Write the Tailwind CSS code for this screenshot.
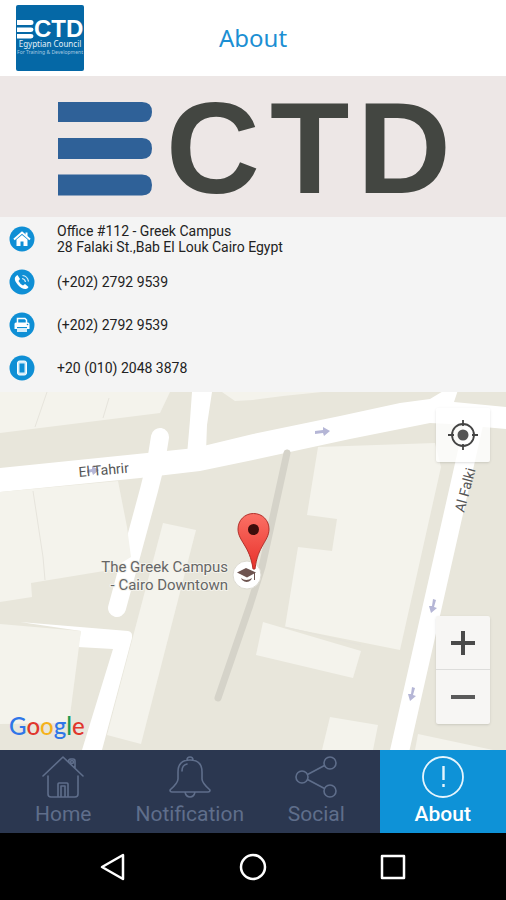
<!DOCTYPE html>
<html lang="en">
<head>
    <meta charset="UTF-8">
    <meta name="viewport" content="width=device-width, initial-scale=1.0">
    <title>ECTD - About</title>
    <script src="https://cdn.jsdelivr.net/npm/@tailwindcss/browser@4"></script>
</head>
<body class="min-h-screen flex flex-col bg-black font-['Roboto',sans-serif]">
    <!-- Header -->
    <header class="grid grid-cols-[1fr_auto_1fr] items-center h-19 px-4 bg-white">
        <svg class="w-17 h-[66px]" viewBox="0 0 68 66" role="img" aria-label="ECTD">
            <rect width="68" height="66" rx="2" fill="#0568a6"/>
            <path fill="#fff" d="M1 15h14q2.500 0 2.500 2.500T15 20H1zM1 22.500h14q2.500 0 2.500 2T15 27H1zM1 29h14q2.500 0 2.500 2T15 33.500H1z"/>
            <text x="18" y="32" font-family="Liberation Sans, sans-serif" font-weight="700" font-size="24" fill="#fff">CTD</text>
            <text x="34" y="42" text-anchor="middle" font-family="Noto Sans, sans-serif" font-size="8" fill="#e4f0f8">Egyptian Council</text>
            <text x="34" y="49" text-anchor="middle" font-family="Noto Sans, sans-serif" font-size="5" fill="#a9cbe2">For Training &amp; Development</text>
        </svg>
        <h1 class="text-2xl text-[#1c8fd3] font-['Noto_Sans',sans-serif]">About</h1>
    </header>

    <!-- Logo banner -->
    <div class="bg-[#ede7e6]">
        <svg class="block w-full h-[141px]" viewBox="0 76 506 141" role="img" aria-label="ECTD">
            <path fill="#2f6198" d="M58 102h84q10 0 10 10t-10 10H58zM58 138h84q10 0 10 10.500t-10 10.500H58zM58 174.500h84q10 0 10 10.500t-10 10.500H58z"/>
            <g font-family="Liberation Sans, sans-serif" font-weight="700" font-size="130" fill="#434641">
                <text x="166" y="193">C</text>
                <text x="270" y="193">T</text>
                <text x="357" y="193">D</text>
            </g>
        </svg>
    </div>

    <!-- Contact details -->
    <ul class="bg-[#f4f4f4] pb-[3px] text-sm leading-4 text-[#222]">
        <li class="flex items-center gap-[22px] h-[43px] px-[9px]">
            <svg class="w-[26px] h-[26px]" viewBox="0 0 26 26">
                <circle cx="13" cy="13" r="12.500" fill="#0f8fd5"/>
                <path d="M5 13.500L13 6.500l8 7" fill="none" stroke="#fff" stroke-width="2"/>
                <path d="M7.500 13.500L13 9l5.500 4.500V20h-4v-4.500h-3V20h-4zM16.500 6.500h2v4l-2-1.500z" fill="#fff"/>
            </svg>
            <p>Office #112 - Greek Campus<br>28 Falaki St.,Bab El Louk Cairo Egypt</p>
        </li>
        <li class="flex items-center gap-[22px] h-[43px] px-[9px]">
            <svg class="w-[26px] h-[26px]" viewBox="0 0 26 26">
                <circle cx="13" cy="13" r="12.500" fill="#0f8fd5"/>
                <path d="M6 8.500Q7 6.500 8.500 6l2.500 4-1.500 2q1.500 3 4.500 4.500l2-1.500 3.500 3q-.5 1.500-2.500 2-4 .5-8-4T6 8.500z" fill="#fff"/>
                <path d="M13 9.500q3 .5 3.500 3.500M13.500 6.500q5 .5 6 6" fill="none" stroke="#d5edf9" stroke-width="1.200"/>
            </svg>
            <a href="tel:+20227929539">(+202) 2792 9539</a>
        </li>
        <li class="flex items-center gap-[22px] h-11 px-[9px]">
            <svg class="w-[26px] h-[26px]" viewBox="0 0 26 26">
                <circle cx="13" cy="13" r="12.500" fill="#0f8fd5"/>
                <path d="M8.500 11V6.500h7.500l1.500 1.500v3" fill="none" stroke="#fff" stroke-width="1.500"/>
                <path d="M7 10.500h12q1.500 0 1.500 1.500v5h-2.500v-2H8v2H5.500v-5q0-1.500 1.500-1.500z" fill="#fff"/>
                <path d="M8 16h10v4H8z" fill="#d5edf9"/>
                <circle cx="18.500" cy="12.500" r=".8" fill="#0f8fd5"/>
            </svg>
            <span>(+202) 2792 9539</span>
        </li>
        <li class="flex items-center gap-[22px] h-[42px] px-[9px]">
            <svg class="w-[26px] h-[26px]" viewBox="0 0 26 26">
                <circle cx="13" cy="13" r="12.500" fill="#0f8fd5"/>
                <rect x="8.500" y="6" width="9" height="14" rx="2" fill="#d5edf9" stroke="#fff"/>
                <rect x="10.500" y="8.500" width="5" height="9" fill="#0f8fd5"/>
            </svg>
            <a href="tel:+2001020483878">+20 (010) 2048 3878</a>
        </li>
    </ul>

    <!-- Map -->
    <main class="relative flex-1 min-h-[357px] overflow-hidden bg-[#e8e6db]">
        <svg class="absolute inset-0 w-full h-full" viewBox="0 392 506 358" preserveAspectRatio="xMidYMid slice">
            <rect y="392" width="506" height="358" fill="#e8e6db"/>
            <!-- roads -->
            <g fill="#fff">
                <path d="M0 468L147 453L195 448L253 434L340 416L400 403L430 399L445 390H458L454 402L506 407V429L450 424L430 423L350 439L253 460L200 471L140 478L0 492z"/>
                <path d="M192 392H212L207 425L206 452L187 455L190 420z"/>
                <path d="M20 622L128 631Q133 632 132 638L102 750H82L113 649L78 647L81 631z"/>
            </g>
            <g fill="none" stroke="#fff" stroke-linecap="round" stroke-linejoin="round">
                <path d="M160 437L156 462L149 490L117 608" stroke-width="18"/>
                <path d="M475 418L398 758" stroke-width="19"/>
            </g>
            <!-- buildings -->
            <g fill="#f4f3ec">
                <path d="M0 392H170L160 413L0 433z"/>
                <path d="M222 392H322L283 396L253 400L235 401z"/>
                <path d="M0 492L118 481L127 527L131 557L110 570L31 583L32 597L0 602z"/>
                <path d="M0 624L81 631L69 723L0 724z"/>
                <path d="M163 523L196 530L141 744L107 735z"/>
                <path d="M318 447L435 443L441 467L400 650L285 627L298 547L332 551L337 519L307 515z"/>
                <path d="M263 622L361 651L353 678L256 655z"/>
                <path d="M330 717L378 725L373 750H322z"/>
                <path d="M418 734L493 750H415z"/>
            </g>
            <path d="M47 392L35 427M109 398L103 418M33 491L43 557L45 580M285 627L361 645" fill="none" stroke="#e6e4dc"/>
            <path d="M287 453L262 567L250 605L218 698" fill="none" stroke="#d5d3c9" stroke-width="7" stroke-linecap="round" stroke-linejoin="round"/>
            <!-- one-way arrows -->
            <g fill="#b5b6d6">
                <path d="M315 431l8-1v-3l7 4-6 5-1-3-8 1z"/>
                <path d="M433 599l3 1-2 7 3 1-6 5-2-7 3 0z"/>
                <path d="M412 687l3 1-2 7 3 1-6 5-2-7 3 0z"/>
                <path d="M87 470l5-1v-3l7 4-6 5-1-3-5 1z"/>
            </g>
            <!-- labels -->
            <g font-family="Roboto, sans-serif" fill="#555">
                <text x="79" y="477" font-size="14" transform="rotate(-5 79 477)">El Tahrir</text>
                <text x="464" y="513" font-size="14" transform="rotate(-75 464 513)">Al Falki</text>
                <g font-size="15" text-anchor="end" fill="#666" stroke="#f4f3ec" stroke-width="2" stroke-linejoin="round" paint-order="stroke">
                    <text x="228" y="572">The Greek Campus</text>
                    <text x="228" y="590">- Cairo Downtown</text>
                </g>
            </g>
            <!-- campus marker -->
            <circle cx="247" cy="575" r="14" fill="#fff" stroke="#dddbd2"/>
            <path d="M237 572.500L246 568l10 4.500-9 5z" fill="#6e5450"/>
            <path d="M241 578q5 4 11 0l-1 2q-4 4-9 0zM254 573h1v7h-1z" fill="#6e5450"/>
            <defs>
                <linearGradient id="pin" x1="0" y1="0" x2="0" y2="1">
                    <stop offset="0" stop-color="#fb7065"/>
                    <stop offset="1" stop-color="#e8322b"/>
                </linearGradient>
            </defs>
            <path d="M253.500 513.500c9 0 15.500 7 15.500 15.500 0 12-11.500 17-14 40h-2c-3-23-15-28-15-40 0-8.500 6.500-15.500 15.500-15.500z" fill="url(#pin)" stroke="#b2302a"/>
            <circle cx="253.500" cy="529.500" r="5.500" fill="#3d0d0b"/>
        </svg>

        <div class="absolute bottom-2 left-[9px] text-2xl leading-8 font-medium font-['Lato',sans-serif]" aria-label="Google">
            <span class="text-[#2f76e8]">G</span><span class="text-[#e0372c]">o</span><span class="text-[#f5b21b]">o</span><span class="text-[#2f76e8]">g</span><span class="text-[#1c9a50]">l</span><span class="text-[#e0372c]">e</span>
        </div>

        <button class="absolute top-4 right-4 grid place-items-center w-[54px] h-[54px] rounded-xs bg-white/80 shadow" aria-label="My location">
            <svg class="w-8 h-8" viewBox="0 0 32 32" fill="none" stroke="#444" stroke-width="1.800">
                <circle cx="16" cy="16" r="11"/>
                <circle cx="16" cy="16" r="5.500" fill="#555" stroke="none"/>
                <path d="M16 1v6M16 25v6M1 16h6M25 16h6"/>
            </svg>
        </button>
        <div class="absolute bottom-[26px] right-4 flex flex-col w-[54px] rounded-xs bg-[#f7f6f4] shadow divide-y divide-[#dddddb]">
            <button class="grid place-items-center h-[54px]" aria-label="Zoom in">
                <svg class="w-6 h-6" viewBox="0 0 24 24" stroke="#4a4a4a" stroke-width="4"><path d="M0 12h24M12 0v24"/></svg>
            </button>
            <button class="grid place-items-center h-[54px]" aria-label="Zoom out">
                <svg class="w-6 h-6" viewBox="0 0 24 24" stroke="#5a5a5a" stroke-width="4"><path d="M0 12h24"/></svg>
            </button>
        </div>
    </main>

    <!-- Tab bar -->
    <nav class="grid grid-cols-4 h-[83px] bg-[#2b3750] text-[21px] leading-7 text-[#5f6e8b]">
        <a href="#home" class="flex flex-col items-center gap-0.5 pt-1.5">
            <svg class="w-[42px] h-[42px]" viewBox="0 0 42 42" fill="none" stroke="currentColor" stroke-width="1.600" stroke-linecap="round" stroke-linejoin="round">
                <path d="M1 20L21 1l20 19M6 20v18q0 3 3 3h24q3 0 3-3V20M16 41V28q0-1 1-1h8q1 0 1 1v13M19 41V30h4v11M27 6q-1-3 2-3h2q2 0 2 2v7"/>
                <circle cx="30" cy="6" r="1.500"/>
            </svg>
            Home
        </a>
        <a href="#notification" class="flex flex-col items-center gap-0.5 pt-1.5">
            <svg class="w-[42px] h-[42px]" viewBox="0 0 42 42" fill="none" stroke="currentColor" stroke-width="1.600" stroke-linecap="round" stroke-linejoin="round">
                <path d="M18 4q0-3 3-3t3 3M9 16Q9 4 21 4t12 12v7q0 4 8 11 0 2-2 2H3q-2 0-2-2 8-7 8-11zM16 36q1 5 5 5t5-5M13 15q0-6 5-7"/>
            </svg>
            Notification
        </a>
        <a href="#social" class="flex flex-col items-center gap-0.5 pt-1.5">
            <svg class="w-[42px] h-[42px]" viewBox="0 0 42 42" fill="none" stroke="currentColor" stroke-width="1.600">
                <circle cx="7" cy="21" r="6"/>
                <circle cx="35" cy="7" r="6"/>
                <circle cx="35" cy="35" r="6"/>
                <path d="M12.500 18.500L29.500 9.500M12.500 23.500L29.500 32.500"/>
            </svg>
            Social
        </a>
        <a href="#about" class="flex flex-col items-center gap-0.5 pt-1.5 bg-[#0e92d7] text-white font-medium" aria-current="page">
            <svg class="w-[42px] h-[42px]" viewBox="0 0 42 42" fill="none" stroke="#e6f5fd">
                <circle cx="21" cy="21" r="20" stroke-width="1.800"/>
                <path d="M21.500 10v14M21.500 28v3" stroke-width="2.400"/>
            </svg>
            About
        </a>
    </nav>

    <!-- System buttons -->
    <footer class="flex justify-center gap-[112px] items-center h-[67px] bg-black">
        <button aria-label="Back">
            <svg class="w-7 h-7" viewBox="0 0 28 28" fill="none" stroke="#fff" stroke-width="2.500" stroke-linejoin="round"><path d="M24 2v24L3 14z"/></svg>
        </button>
        <button aria-label="Home screen">
            <svg class="w-7 h-7" viewBox="0 0 28 28" fill="none" stroke="#fff" stroke-width="2.500"><circle cx="14" cy="14" r="12"/></svg>
        </button>
        <button aria-label="Recent apps">
            <svg class="w-7 h-7" viewBox="0 0 28 28" fill="none" stroke="#fff" stroke-width="2.500" stroke-linejoin="round"><path d="M3 3h22v22H3z"/></svg>
        </button>
    </footer>
</body>
</html>
